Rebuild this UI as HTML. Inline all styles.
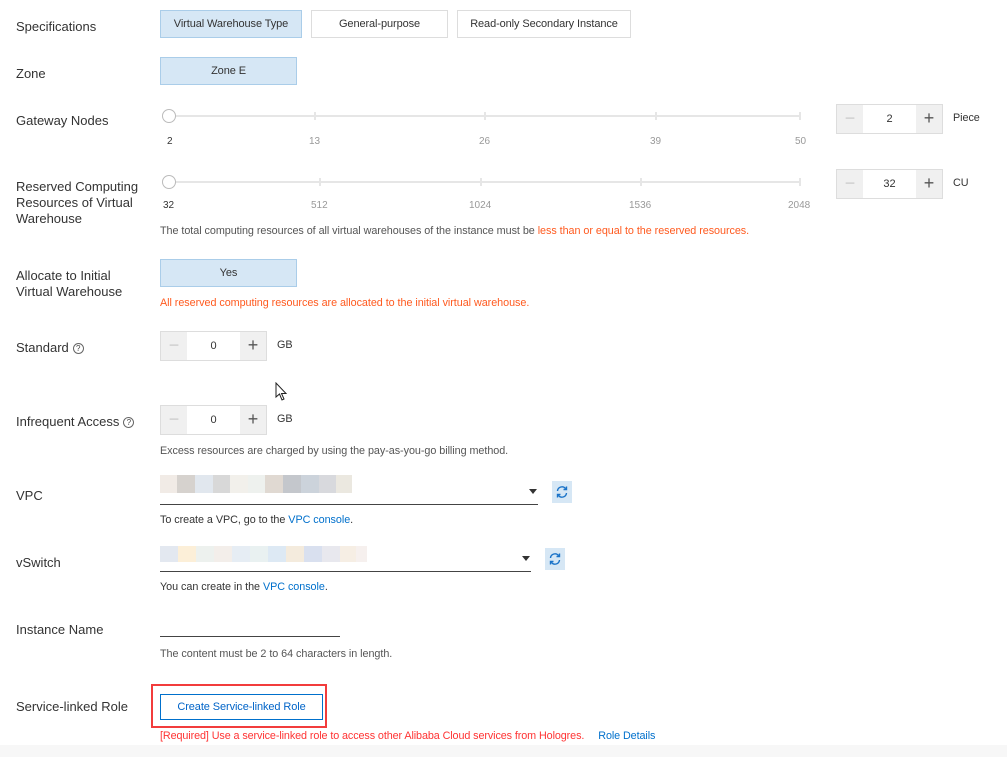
<!DOCTYPE html>
<html><head><meta charset="utf-8"><style>
*{margin:0;padding:0;box-sizing:border-box}
body{width:1007px;height:757px;background:#fff;font-family:"Liberation Sans",Arial,sans-serif;color:#333;position:relative;overflow:hidden}
.a{position:absolute;white-space:nowrap}
.lbl{font-size:13px;color:#333;line-height:16px}
.btn{position:absolute;border:1px solid #ddd;background:#fff;font-size:11px;text-align:center;color:#333;letter-spacing:-0.1px}
.sel{background:#d6e7f5;border-color:#aacde9}
.s{font-size:10.8px;color:#555;letter-spacing:-0.05px}
.t{font-size:10px;color:#999}
.org{color:#ff5a1f}
.lnk{color:#0070cc}
.track{position:absolute;height:2px;background:#e6e6e6}
.tick{position:absolute;width:2px;height:8px;background:#e6e6e6}
.knob{position:absolute;width:14px;height:14px;border:1px solid #bbb;border-radius:50%;background:#fff}
.step{position:absolute;border:1px solid #ddd;height:30px;background:#fff}
.step .m,.step .p{position:absolute;top:0;width:26px;height:28px;background:#f0f0f0;font-size:18px;text-align:center;line-height:27px}
.step .m{left:0;color:#ccc}.step .p{right:0;color:#555}
.step .v{position:absolute;left:26px;right:26px;top:0;line-height:28px;text-align:center;font-size:11px}
.help{display:inline-block;width:11px;height:11px;border:1px solid #666;border-radius:50%;font-size:8px;line-height:9px;text-align:center;vertical-align:1px;margin-left:4px;color:#444}
.ref{position:absolute;background:#d6e7f5;width:20px;height:22px}
.line{position:absolute;height:1px;background:#444}
</style></head><body>
<div class="a lbl" style="left:16px;top:19px">Specifications</div>
<div class="btn sel" style="left:160px;top:10px;width:142px;height:28px;line-height:26px">Virtual Warehouse Type</div>
<div class="btn" style="left:311px;top:10px;width:137px;height:28px;line-height:26px">General-purpose</div>
<div class="btn" style="left:457px;top:10px;width:174px;height:28px;line-height:26px">Read-only Secondary Instance</div>

<div class="a lbl" style="left:16px;top:66px">Zone</div>
<div class="btn sel" style="left:160px;top:57px;width:137px;height:28px;line-height:26px">Zone E</div>

<div class="a lbl" style="left:16px;top:113px">Gateway Nodes</div>
<div class="track" style="left:168px;top:115px;width:633px"></div>
<div class="tick" style="left:314px;top:112px"></div><div class="tick" style="left:484px;top:112px"></div><div class="tick" style="left:655px;top:112px"></div><div class="tick" style="left:799px;top:112px"></div>
<div class="knob" style="left:162px;top:109px"></div>
<div class="a t" style="left:167px;top:136px;color:#333">2</div>
<div class="a t" style="left:309px;top:136px">13</div>
<div class="a t" style="left:479px;top:136px">26</div>
<div class="a t" style="left:650px;top:136px">39</div>
<div class="a t" style="left:795px;top:136px">50</div>
<div class="step" style="left:836px;top:104px;width:107px"><div class="m">−</div><div class="v">2</div><div class="p">+</div></div>
<div class="a s" style="left:953px;top:112px;color:#333">Piece</div>

<div class="a lbl" style="left:16px;top:179px">Reserved Computing<br>Resources of Virtual<br>Warehouse</div>
<div class="track" style="left:168px;top:181px;width:633px"></div>
<div class="tick" style="left:319px;top:178px"></div><div class="tick" style="left:480px;top:178px"></div><div class="tick" style="left:640px;top:178px"></div><div class="tick" style="left:799px;top:178px"></div>
<div class="knob" style="left:162px;top:175px"></div>
<div class="a t" style="left:163px;top:200px;color:#333">32</div>
<div class="a t" style="left:311px;top:200px">512</div>
<div class="a t" style="left:469px;top:200px">1024</div>
<div class="a t" style="left:629px;top:200px">1536</div>
<div class="a t" style="left:788px;top:200px">2048</div>
<div class="step" style="left:836px;top:169px;width:107px"><div class="m">−</div><div class="v">32</div><div class="p">+</div></div>
<div class="a s" style="left:953px;top:177px;color:#333">CU</div>
<div class="a s" style="left:160px;top:225px">The total computing resources of all virtual warehouses of the instance must be <span class="org">less than or equal to the reserved resources.</span></div>

<div class="a lbl" style="left:16px;top:268px">Allocate to Initial<br>Virtual Warehouse</div>
<div class="btn sel" style="left:160px;top:259px;width:137px;height:28px;line-height:26px">Yes</div>
<div class="a s org" style="left:160px;top:297px">All reserved computing resources are allocated to the initial virtual warehouse.</div>

<div class="a lbl" style="left:16px;top:340px">Standard<span class="help">?</span></div>
<div class="step" style="left:160px;top:331px;width:107px"><div class="m">−</div><div class="v">0</div><div class="p">+</div></div>
<div class="a s" style="left:277px;top:339px;color:#333">GB</div>
<svg class="a" style="left:275px;top:382px" width="14" height="20" viewBox="0 0 14 20"><path d="M1 1 L1 15 L4.5 12 L7 18 L9 17 L6.5 11.5 L11 11.5 Z" fill="#fff" stroke="#222" stroke-width="1"/></svg>

<div class="a lbl" style="left:16px;top:414px">Infrequent Access<span class="help">?</span></div>
<div class="step" style="left:160px;top:405px;width:107px"><div class="m">−</div><div class="v">0</div><div class="p">+</div></div>
<div class="a s" style="left:277px;top:413px;color:#333">GB</div>
<div class="a s" style="left:160px;top:445px">Excess resources are charged by using the pay-as-you-go billing method.</div>

<div class="a lbl" style="left:16px;top:488px">VPC</div>
<div class="a" style="left:160px;top:475px;height:18px;width:192px;background:linear-gradient(90deg,#f1ebe6 0 17px,#d6d2ce 17px 35px,#e1e7ee 35px 53px,#d8d8d8 53px 70px,#f2f0eb 70px 88px,#eef1ee 88px 105px,#e0d9d2 105px 123px,#c4c7cc 123px 141px,#ccd3db 141px 159px,#d8d9dd 159px 176px,#ebe8e0 176px 192px)"></div>
<div class="line" style="left:160px;top:504px;width:378px"></div>
<div class="a" style="left:529px;top:489px;width:0;height:0;border-left:4px solid transparent;border-right:4px solid transparent;border-top:5px solid #333"></div>
<div class="ref" style="left:552px;top:481px"></div>
<svg class="a" style="left:555px;top:485px" width="14" height="14" viewBox="0 0 14 14"><path d="M2.5 6a4.5 4.5 0 0 1 8.2-2.2M11.5 8a4.5 4.5 0 0 1-8.2 2.2" fill="none" stroke="#1a73c8" stroke-width="1.4"/><path d="M11.5 1.5v3h-3M2.5 12.5v-3h3" fill="none" stroke="#1a73c8" stroke-width="1.4"/></svg>
<div class="a s" style="left:160px;top:514px;color:#333">To create a VPC, go to the <span class="lnk">VPC console</span>.</div>

<div class="a lbl" style="left:16px;top:555px">vSwitch</div>
<div class="a" style="left:160px;top:546px;height:16px;width:207px;background:linear-gradient(90deg,#e3e8f0 0 18px,#fcefd8 18px 36px,#edf1ee 36px 54px,#f3eeea 54px 72px,#e6edf4 72px 90px,#e9f1f1 90px 108px,#dde9f4 108px 126px,#f4ebdd 126px 144px,#d9e0ef 144px 162px,#e8e8ee 162px 180px,#f6eee4 180px 196px,#f6f0ee 196px 207px)"></div>
<div class="line" style="left:160px;top:571px;width:371px"></div>
<div class="a" style="left:522px;top:556px;width:0;height:0;border-left:4px solid transparent;border-right:4px solid transparent;border-top:5px solid #333"></div>
<div class="ref" style="left:545px;top:548px"></div>
<svg class="a" style="left:548px;top:552px" width="14" height="14" viewBox="0 0 14 14"><path d="M2.5 6a4.5 4.5 0 0 1 8.2-2.2M11.5 8a4.5 4.5 0 0 1-8.2 2.2" fill="none" stroke="#1a73c8" stroke-width="1.4"/><path d="M11.5 1.5v3h-3M2.5 12.5v-3h3" fill="none" stroke="#1a73c8" stroke-width="1.4"/></svg>
<div class="a s" style="left:160px;top:581px;color:#333">You can create in the <span class="lnk">VPC console</span>.</div>

<div class="a lbl" style="left:16px;top:622px">Instance Name</div>
<div class="line" style="left:160px;top:636px;width:180px"></div>
<div class="a s" style="left:160px;top:648px">The content must be 2 to 64 characters in length.</div>

<div class="a" style="left:0;top:745px;width:1007px;height:12px;background:#f7f7f7"></div>
<div class="a lbl" style="left:16px;top:699px">Service-linked Role</div>
<div class="a" style="left:151px;top:684px;width:176px;height:44px;border:2px solid #f23c3c"></div>
<div class="btn" style="left:160px;top:694px;width:163px;height:26px;line-height:24px;border-color:#0070cc;color:#0064c8">Create Service-linked Role</div>
<div class="a s" style="left:160px;top:730px;color:#f33;letter-spacing:-0.1px">[Required] Use a service-linked role to access other Alibaba Cloud services from Hologres.<span class="lnk" style="margin-left:14px">Role Details</span></div>
</body></html>
